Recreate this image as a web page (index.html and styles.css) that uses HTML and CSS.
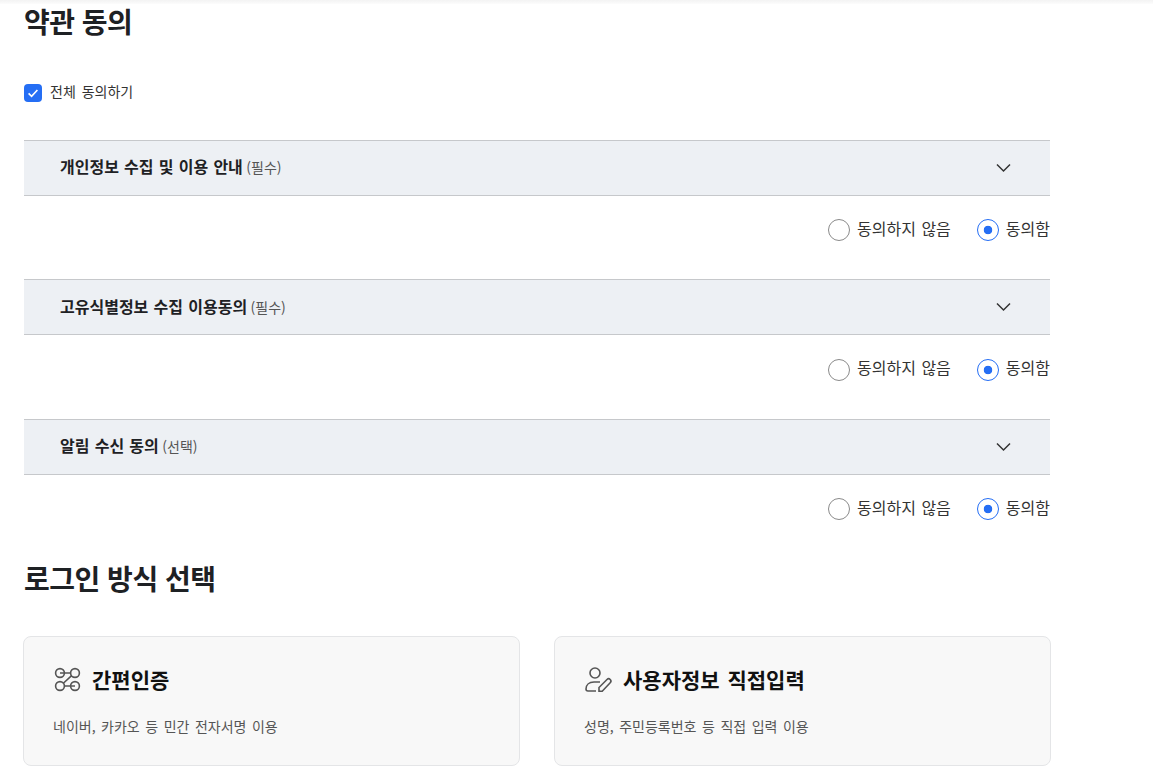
FILE: index.html
```html
<!DOCTYPE html>
<html lang="ko">
<head>
<meta charset="utf-8">
<title>약관 동의</title>
<link rel="stylesheet" href="styles.css">
</head>
<body>
<div class="topshade"></div>
<main class="page">
  <h2 class="section-title">약관 동의</h2>
  <label class="check-all">
    <span class="checkbox"><svg width="18" height="18" viewBox="0 0 18 18" fill="none"><path d="M4.6 9.4l3 3L13.4 6" stroke="#fff" stroke-width="1.6"/></svg></span>
    <span class="check-label">전체 동의하기</span>
  </label>

  <section class="term">
    <div class="term-head">
      <div class="term-title"><strong>개인정보 수집 및 이용 안내</strong> <span class="tag">(필수)</span></div>
      <svg class="chev" width="16" height="16" viewBox="0 0 16 16" fill="none"><path d="M2 4.5L8.5 11 15 4.5" stroke="#333" stroke-width="1.5"/></svg>
    </div>
    <div class="options">
      <span class="opt"><span class="radio"></span><span class="opt-text">동의하지 않음</span></span>
      <span class="opt"><span class="radio on"></span><span class="opt-text">동의함</span></span>
    </div>
  </section>

  <section class="term">
    <div class="term-head">
      <div class="term-title"><strong>고유식별정보 수집 이용동의</strong> <span class="tag">(필수)</span></div>
      <svg class="chev" width="16" height="16" viewBox="0 0 16 16" fill="none"><path d="M2 4.5L8.5 11 15 4.5" stroke="#333" stroke-width="1.5"/></svg>
    </div>
    <div class="options">
      <span class="opt"><span class="radio"></span><span class="opt-text">동의하지 않음</span></span>
      <span class="opt"><span class="radio on"></span><span class="opt-text">동의함</span></span>
    </div>
  </section>

  <section class="term">
    <div class="term-head">
      <div class="term-title"><strong>알림 수신 동의</strong> <span class="tag">(선택)</span></div>
      <svg class="chev" width="16" height="16" viewBox="0 0 16 16" fill="none"><path d="M2 4.5L8.5 11 15 4.5" stroke="#333" stroke-width="1.5"/></svg>
    </div>
    <div class="options">
      <span class="opt"><span class="radio"></span><span class="opt-text">동의하지 않음</span></span>
      <span class="opt"><span class="radio on"></span><span class="opt-text">동의함</span></span>
    </div>
  </section>

  <h2 class="section-title login-title">로그인 방식 선택</h2>
  <div class="cards">
    <article class="card">
      <div class="card-head">
        <svg width="30" height="30" viewBox="0 0 30 30" fill="none" stroke="#555" stroke-width="1.6"><circle cx="7" cy="9" r="4.4"/><circle cx="22" cy="9" r="4.4"/><circle cx="7" cy="22" r="4.4"/><circle cx="22" cy="22" r="4.4"/><path d="M7 9h10.6M11.4 22H22M10.6 19l8-7.4"/></svg>
        <h3>간편인증</h3>
      </div>
      <p>네이버, 카카오 등 민간 전자서명 이용</p>
    </article>
    <article class="card">
      <div class="card-head">
        <svg width="30" height="30" viewBox="0 0 30 30" fill="none" stroke="#555" stroke-width="1.6"><circle cx="11" cy="9" r="5"/><path d="M12 27H4a2 2 0 0 1-2-2c0-4 3-7 8-7h6"/><path d="M15 27.2v-3.7l8-8a2.2 2.2 0 0 1 3.2 3.2l-8 8.5z"/></svg>
        <h3>사용자정보 직접입력</h3>
      </div>
      <p>성명, 주민등록번호 등 직접 입력 이용</p>
    </article>
  </div>
</main>
</body>
</html>
```
FILE: styles.css
```css
* { box-sizing: border-box; }
html, body { margin: 0; padding: 0; }
body {
  background: #fff;
  color: #1e1e1e;
  font-family: "Noto Sans CJK KR", "Noto Sans", sans-serif;
  height: 776px;
  overflow: hidden;
}
.topshade { height: 4px; background: linear-gradient(#f3f3f3, #fcfcfc); }
.page { width: 1050px; padding-left: 24px; }
.section-title {
  margin: -1px 0 0;
  font-size: 28px;
  line-height: 36px;
  font-weight: 700;
  letter-spacing: -0.5px;
  color: #1e2124;
}
.check-all {
  display: flex;
  align-items: center;
  gap: 8px;
  margin-top: 40px;
  height: 28px;
  font-size: 14px;
  word-spacing: 2px;
  color: #333;
}
.check-label { margin-bottom: 5px; }
.checkbox {
  width: 18px;
  height: 18px;
  border-radius: 4px;
  background: #256ef4;
  display: flex;
  align-items: center;
  justify-content: center;
}
.check-all + .term { margin-top: 32.9px; }
.term-head {
  height: 56px;
  background: #edf0f4;
  border-top: 1px solid #c6c8cb;
  border-bottom: 1px solid #c6c8cb;
  padding: 0 39px 0 36px;
  display: flex;
  align-items: center;
  justify-content: space-between;
}
.term-title { font-size: 16px; color: #1e2124; margin-bottom: 3px; }
.term-title strong { font-weight: 700; word-spacing: 0.75px; }
.tag { font-size: 14px; color: #555; margin-left: -1px; }
.options {
  height: 83.5px;
  padding-top: 23.6px;
  display: flex;
  justify-content: flex-end;
  align-items: flex-start;
  gap: 26px;
  font-size: 16px;
  word-spacing: 1px;
  color: #333;
}
.opt { display: flex; align-items: center; gap: 7px; height: 22px; }
.opt-text { margin-bottom: 5px; }
.radio {
  width: 22px;
  height: 22px;
  border-radius: 50%;
  border: 1px solid #8a8a8a;
  background: #fff;
}
.radio.on {
  border-color: #256ef4;
  background: radial-gradient(circle, #256ef4 0 4px, #fff 4.6px);
}
.login-title { margin-top: 2px; }
.cards { display: flex; gap: 34px; margin: 40px 0 0 -1px; width: 1028px; }
.card {
  flex: 1;
  height: 130px;
  background: #f8f8f8;
  border: 1px solid #e4e5e7;
  border-radius: 8px;
  padding: 27px 29px;
}
.card-head { display: flex; align-items: center; gap: 9px; height: 30px; }
.card h3 { margin: 0; font-size: 21px; font-weight: 700; color: #111; word-spacing: 2px; }
.card p { margin: 22px 0 0; font-size: 14px; line-height: 20px; color: #555; word-spacing: 1.6px; }
```
